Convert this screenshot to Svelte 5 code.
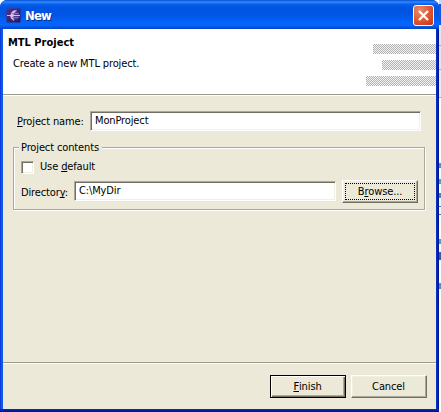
<script>
  let projectName = $state('MonProject');
  let directory = $state('C:\\MyDir');
  let useDefault = $state(false);
  const stripes = [
    { width: 63, gap: 6 },
    { width: 54, gap: 6 },
    { width: 70, gap: 0 }
  ];
</script>

<div class="desktop">
  <section class="window">
    <header class="titlebar">
      <svg class="logo" width="16" height="16" viewBox="0 0 16 16">
        <defs>
          <linearGradient id="sky" x1="0" y1="0" x2="1" y2="1">
            <stop offset="0" stop-color="#5a3080" />
            <stop offset="1" stop-color="#25155c" />
          </linearGradient>
        </defs>
        <rect x="0.5" y="0.5" width="14" height="14" fill="url(#sky)" />
        <circle cx="9" cy="7.5" r="4.5" fill="#4a3a94" />
        <path d="M10.5 2.5A5.2 5.2 0 0 0 8 12.5A7.5 7.5 0 0 1 10.5 2.5Z" fill="#e6c8ee" stroke="#c9a4dd" stroke-width="0.6" />
        <path d="M1 7.5H14" stroke="#cdc2f2" stroke-width="1" />
        <path d="M6 5.5H12.5M6 9.5H12.5" stroke="#7f70c0" stroke-width="1" />
      </svg>
      <span class="title">New</span>
      <button class="close" aria-label="Close">
        <svg width="17" height="17" viewBox="0 0 17 17">
          <path d="M4 4L13 13M13 4L4 13" stroke="#fff" stroke-width="2.2" />
        </svg>
      </button>
    </header>

    <div class="client">
      <div class="banner">
        <div class="heading">
          <h1>MTL Project</h1>
          <p>Create a new MTL project.</p>
        </div>
        <div class="stripes">
          {#each stripes as s}
            <i style="width:{s.width}px;margin-bottom:{s.gap}px"></i>
          {/each}
        </div>
      </div>

      <main>
        <div class="row name">
          <label for="name"><u>P</u>roject name:</label>
          <input id="name" class="field" bind:value={projectName} />
        </div>
        <div class="group">
          <span class="legend">Project contents</span>
          <label class="check">
            <input type="checkbox" bind:checked={useDefault} />
            <span>Use <u>d</u>efault</span>
          </label>
          <div class="row dir">
            <label for="dir">Director<u>y</u>:</label>
            <input id="dir" class="field" bind:value={directory} />
            <button class="btn focus"><span>B<u>r</u>owse...</span></button>
          </div>
        </div>
      </main>

      <footer>
        <button class="btn default"><span><u>F</u>inish</span></button>
        <button class="btn"><span>Cancel</span></button>
      </footer>
    </div>
  </section>
  <aside></aside>
</div>

<style>
  :global(body) { margin: 0; background: #fff; overflow: hidden; }
  .desktop {
    display: flex; width: 441px; height: 412px;
    font: 11px/14px "DejaVu Sans Condensed", "DejaVu Sans", sans-serif;
    font-stretch: condensed;
    letter-spacing: -0.13px; color: #000;
  }
  .desktop * { box-sizing: border-box; }
  .window {
    width: 439px; height: 412px; display: flex; flex-direction: column;
    border-radius: 7px 7px 0 0; overflow: hidden;
    background:
      linear-gradient(#0a35d0, #0020ac 1px, #00138c) 0 100% / 100% 3px no-repeat,
      linear-gradient(90deg, #0831d9 0, #1660ee 2px, #0855dd 3px, #0855dd 50%, #0835d0 436px, #001ea0 438px, #00138c 439px);
  }
  .titlebar {
    flex: none; height: 29px; display: flex; align-items: center; padding: 2px 5px 0 6px;
    background: linear-gradient(#0a4bd0 0, #2a8cff 2px, #0a62ee 4px, #0054e3 7px, #0055e5 15px, #0363fb 22px, #0366ff 25px, #0455df 27px, #0040c8 29px);
  }
  .logo { flex: none; display: block; }
  .title {
    flex: 1; margin-left: 3px; padding-top: 1px; color: #fff; font: bold 13px/16px "DejaVu Sans Condensed", sans-serif;
    font-stretch: condensed; letter-spacing: -0.8px; text-shadow: 1px 1px #0a2c86;
  }
  .close {
    width: 21px; height: 21px; padding: 1px; border: 1px solid #fff; border-radius: 3px;
    background: radial-gradient(circle at 30% 25%, #ec8a6c, #dc502c 60%, #bd3312);
  }
  .close svg { display: block; }
  .client {
    flex: 1; margin: 0 3px 3px; background: #ece9d8; display: flex; flex-direction: column;
    min-height: 0;
  }
  .banner {
    height: 66px; flex: none; display: flex; justify-content: space-between;
    background: #fff; border-bottom: 1px solid #9d9a8e;
  }
  .heading { padding: 7px 0 0 5px; }
  h1 { margin: 0; font: bold 11px/14px "DejaVu Sans Condensed", sans-serif; font-stretch: condensed; letter-spacing: 0; }
  p { margin: 7px 0 0 5px; white-space: nowrap; }
  .stripes { display: flex; flex-direction: column; align-items: flex-end; padding-top: 15px; }
  .stripes i {
    display: block; height: 10px;
    background: repeating-conic-gradient(#b2b2b2 0 25%, #f4f4f4 0 50%) 0 0 / 2px 2px;
  }
  main { flex: 1; border-top: 1px solid #fff; padding: 15px 11px 0 10px; }
  .row { display: flex; align-items: center; }
  label { white-space: nowrap; }
  u { text-decoration: underline; text-decoration-thickness: 1px; text-underline-offset: 1px; text-decoration-skip-ink: none; }
  .name { padding: 0 4px; height: 20px; }
  .name label { width: 73px; margin-top: 2px; }
  .field {
    flex: 1; min-width: 0; height: 20px; padding: 0 4px 1px; outline: 0; background: #fff;
    border: 1px solid; border-color: #aca899 #fff #fff #aca899; border-radius: 0;
    box-shadow: inset 1px 1px #716f64, inset -1px -1px #f1efe2;
    font: inherit; letter-spacing: inherit; color: inherit;
  }
  .group {
    position: relative; height: 63px; margin-top: 16px; padding: 12px 6px 0 7px;
    border: 1px solid #aca899; box-shadow: 1px 1px #fff, inset 1px 1px #fff;
  }
  .legend { position: absolute; top: -7px; left: 5px; padding: 0 3px 0 2px; background: #ece9d8; white-space: nowrap; }
  .check { display: flex; align-items: center; height: 14px; gap: 6px; }
  .check input {
    appearance: none; margin: 0; width: 13px; height: 13px; background: #fff;
    border: 1px solid; border-color: #aca899 #fff #fff #aca899;
    box-shadow: inset 1px 1px #716f64, inset -1px -1px #f1efe2;
  }
  .dir { height: 24px; margin-top: 5px; }
  .dir label { width: 53px; margin-top: 3px; }
  .dir .btn { margin: 1px 0 0 6px; }
  .btn {
    flex: none; width: 76px; height: 23px; padding: 2px; border-radius: 0; background: #ece9d8;
    border: 1px solid; border-color: #fff #716f64 #716f64 #fff;
    box-shadow: inset -1px -1px #aca899, inset 1px 1px #f1efe2;
    font: inherit; letter-spacing: inherit; color: inherit;
  }
  .btn span { display: flex; align-items: center; justify-content: center; height: 100%; padding-right: 1px; border: 1px solid transparent; white-space: pre; }
  .focus span { border: 1px dotted #000; padding-right: 0; }
  .btn.default { border-color: #000; box-shadow: inset 1px 1px #fff, inset -1px -1px #716f64, inset -2px -2px #aca899; }
  footer {
    flex: none; height: 47px; display: flex; justify-content: flex-end; gap: 5px;
    padding: 12px 9px 0 0; border-top: 1px solid #9d9a8e; box-shadow: inset 0 1px #fff;
  }
  aside {
    width: 2px;
    background: linear-gradient(#c8dcf8 0 4px, #1558da 4px 25px, #e8e4f6 25px 45px, #a7a2d8 45px 46px, #e8e4f6 46px 69px, #a7a2d8 69px 70px, #ede9fa 70px 97px, #a7a2d8 97px 98px, #fff 98px 163px, #5d8cb8 163px 168px, #fff 168px 179px, #5a9bb0 179px 184px, #fff 184px 193px, #5a7eb0 193px 198px, #fff 198px 206px, #3d6ca0 206px 207px, #fff 207px 214px, #3d6ca0 214px 215px, #fff 215px 239px, #5a9bb0 239px 244px, #fff 244px 252px, #4057a0 252px 260px, #fff 260px 283px, #5d8cb8 283px 289px, #fff 289px);
  }
</style>
